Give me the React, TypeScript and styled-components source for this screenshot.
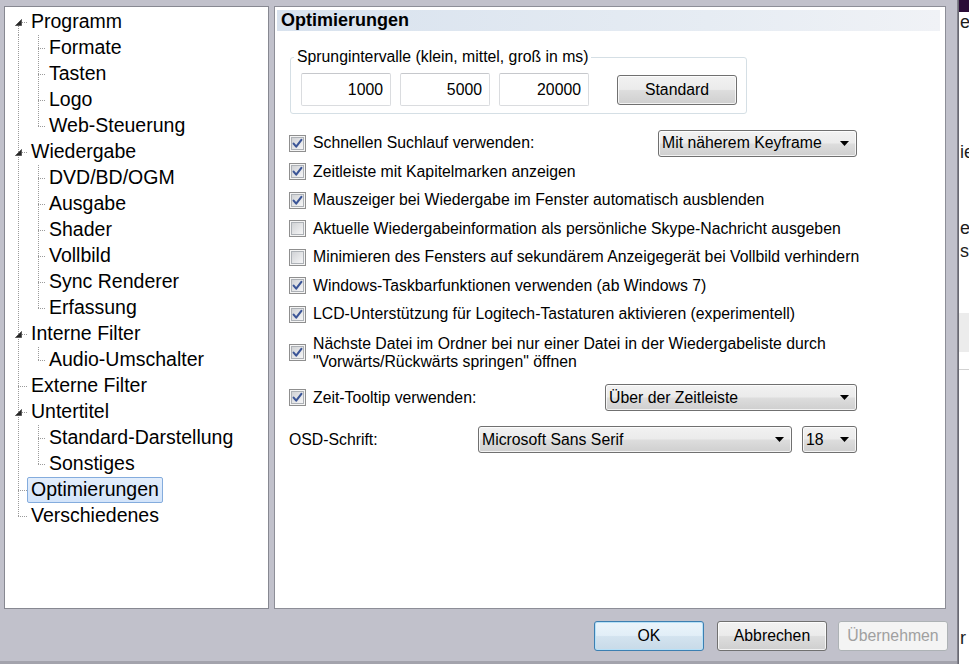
import { FC, useId } from "react"
import styled, { createGlobalStyle, css } from "styled-components"

const GlobalStyle = createGlobalStyle`
  html, body {
    margin: 0;
    padding: 0;
    background: #c1c1cb;
  }
  body {
    width: 969px;
    height: 664px;
    overflow: hidden;
  }
`

const Screen = styled.div`
  display: flex;
  width: 969px;
  height: 664px;
  overflow: hidden;
`
const Dialog = styled.div`
  width: 957px;
  flex: none;
  display: flex;
  flex-direction: column;
  background: #c1c1cb;
  border-bottom: 3px solid #a3a3ac;
  box-sizing: border-box;
`
const FrameEdge = styled.div`
  width: 2px;
  flex: none;
  background: linear-gradient(to right, #8e8e98, #5d5d66);
`
const OtherWindow = styled.div`
  flex: 1;
  display: flex;
  flex-direction: column;
  background: #fff;
  overflow: hidden;
  font: 18px "Liberation Sans", Arial, sans-serif;
  color: #1c1c1c;
`
const OtherTitle = styled.div`
  height: 12px;
  flex: none;
  background: #2b0c37;
`
const Fragment = styled.div<{ $top: number }>`
  margin-top: ${(p) => p.$top}px;
  line-height: 20px;
  white-space: nowrap;
  padding-left: 1px;
`
const FragmentBox = styled.div<{ $top: number; $h: number; $bg: string }>`
  margin-top: ${(p) => p.$top}px;
  height: ${(p) => p.$h}px;
  background: ${(p) => p.$bg};
  flex: none;
`

const Main = styled.div`
  display: flex;
  gap: 5px;
  padding: 6px 0 0 4px;
  height: 609px;
  box-sizing: border-box;
`
const TreePanel = styled.div`
  width: 265px;
  height: 603px;
  box-sizing: border-box;
  background: #fff;
  border: 1px solid #878891;
  padding-top: 2px;
  font: 19.5px "Liberation Sans", Arial, sans-serif;
  color: #000;
`
const SettingsPanel = styled.div`
  width: 672px;
  height: 603px;
  box-sizing: border-box;
  background: #fff;
  border: 1px solid #8d8e97;
  display: flex;
  flex-direction: column;
`

/* ---------- tree ---------- */

type LineKind = "full" | "top" | "bottom" | "none"

const dotsV = "repeating-linear-gradient(to bottom, #9b9b9b 0 1px, transparent 1px 2px)"
const dotsH = "repeating-linear-gradient(to right, #9b9b9b 0 1px, transparent 1px 2px)"

const TreeRow = styled.div`
  display: flex;
  height: 26px;
  align-items: center;
`
const Guide = styled.span<{ $w: number; $x: number; $line: LineKind; $stub: boolean }>`
  position: relative;
  flex: none;
  width: ${(p) => p.$w}px;
  height: 100%;

  &::before {
    content: "";
    display: ${(p) => (p.$line === "none" ? "none" : "block")};
    position: absolute;
    left: ${(p) => p.$x}px;
    width: 1px;
    top: ${(p) => (p.$line === "bottom" ? "50%" : "0")};
    bottom: ${(p) => (p.$line === "top" ? "50%" : "0")};
    background: ${dotsV};
  }
  &::after {
    content: "";
    display: ${(p) => (p.$stub ? "block" : "none")};
    position: absolute;
    left: ${(p) => p.$x}px;
    right: 0;
    top: 50%;
    height: 1px;
    background: ${dotsH};
  }
`
const Expander = styled.svg`
  position: absolute;
  left: 10px;
  top: 10px;
  z-index: 1;
`
const NodeLabel = styled.span<{ $selected?: boolean }>`
  height: 24px;
  line-height: 23px;
  padding: 0 3px;
  border: 1px solid transparent;
  border-radius: 2px;
  white-space: nowrap;
  ${(p) =>
    p.$selected &&
    css`
      background: linear-gradient(#e3eefc, #d3e4fa);
      border-color: #84acdd;
    `}
`

interface TreeNode {
  label: string
  children?: string[]
  selected?: boolean
}

const tree: TreeNode[] = [
  { label: "Programm", children: ["Formate", "Tasten", "Logo", "Web-Steuerung"] },
  {
    label: "Wiedergabe",
    children: ["DVD/BD/OGM", "Ausgabe", "Shader", "Vollbild", "Sync Renderer", "Erfassung"],
  },
  { label: "Interne Filter", children: ["Audio-Umschalter"] },
  { label: "Externe Filter" },
  { label: "Untertitel", children: ["Standard-Darstellung", "Sonstiges"] },
  { label: "Optimierungen", selected: true },
  { label: "Verschiedenes" },
]

const ExpandedGlyph = () => (
  <Expander width="7" height="7" viewBox="0 0 7 7">
    <polygon points="6.5,0.5 6.5,6.5 0.5,6.5" fill="#262626" stroke="#595959" strokeWidth="1" />
  </Expander>
)

const Tree: FC = () => (
  <TreePanel>
    {tree.map((node, i) => {
      const isFirst = i === 0
      const isLast = i === tree.length - 1
      const line: LineKind = isFirst ? "bottom" : isLast ? "top" : "full"
      return (
        <div key={node.label}>
          <TreeRow>
            <Guide $w={22} $x={13} $line={line} $stub>
              {node.children && <ExpandedGlyph />}
            </Guide>
            <NodeLabel $selected={node.selected}>{node.label}</NodeLabel>
          </TreeRow>
          {node.children?.map((child, j) => (
            <TreeRow key={child}>
              <Guide $w={22} $x={13} $line={isLast ? "none" : "full"} $stub={false} />
              <Guide
                $w={18}
                $x={11}
                $line={j === node.children!.length - 1 ? "top" : "full"}
                $stub
              />
              <NodeLabel>{child}</NodeLabel>
            </TreeRow>
          ))}
        </div>
      )
    })}
  </TreePanel>
)

/* ---------- settings page ---------- */

const TitleBar = styled.div`
  margin: 3px 5px 0 2px;
  height: 21px;
  line-height: 21px;
  padding-left: 4px;
  font: bold 18px "Liberation Sans", Arial, sans-serif;
  color: #000;
  background: linear-gradient(to right, #d8e2ee, #e6ecf3 65%, #f0f2f6);
`
const Body = styled.div`
  display: flex;
  flex-direction: column;
  padding: 0 88px 0 14px;
  font: 15.8px "Liberation Sans", Arial, sans-serif;
  color: #000;
`
const GroupBox = styled.fieldset`
  margin: 17px 0 0 1px;
  width: 457px;
  box-sizing: border-box;
  padding: 7px 9px 7px 10px;
  border: 1px solid #d5dfe5;
  border-radius: 3px;
  display: flex;
  align-items: center;
`
const Legend = styled.legend`
  margin-left: -7px;
  padding: 0 3px;
  line-height: 18px;
`
const NumberField = styled.input`
  width: 90px;
  height: 33px;
  box-sizing: border-box;
  margin: 0 9px 0 0;
  padding: 0 7px 0 0;
  border: 1px solid #dadcdf;
  border-top-color: #c6c8cc;
  border-radius: 2px;
  text-align: right;
  font: 15.8px "Liberation Sans", Arial, sans-serif;
  color: #000;
  background: #fff;
  outline: none;
`

const buttonFace = css`
  box-sizing: border-box;
  border: 1px solid #707070;
  border-radius: 3px;
  background: linear-gradient(#f2f2f2 0%, #ebebeb 48%, #dddddd 52%, #cfcfcf 100%);
  box-shadow: inset 0 0 0 1px rgba(255, 255, 255, 0.75);
  font: 15.8px "Liberation Sans", Arial, sans-serif;
  color: #000;
`
const PushButton = styled.button<{ $w: number; $gap?: number; $variant?: "default" | "disabled" }>`
  ${buttonFace};
  width: ${(p) => p.$w}px;
  height: 30px;
  padding: 0;
  margin-right: ${(p) => p.$gap ?? 0}px;
  flex: none;
  ${(p) =>
    p.$variant === "default" &&
    css`
      border-color: #3c7fb1;
      box-shadow: inset 0 0 0 1px #b6e0f7;
      background: linear-gradient(#eaf4fb 0%, #e2eef7 48%, #d3e3ef 52%, #c8dae8 100%);
    `}
  ${(p) =>
    p.$variant === "disabled" &&
    css`
      border-color: #adb2b5;
      background: #f4f4f4;
      box-shadow: none;
      color: #a0a0a0;
    `}
`
const StandardButton = styled(PushButton)`
  margin-left: 19px;
`

const Combo = styled.div<{ $w: number; $auto?: boolean }>`
  ${buttonFace};
  width: ${(p) => p.$w}px;
  height: 27px;
  flex: none;
  display: flex;
  align-items: center;
  justify-content: space-between;
  padding: 0 7px 0 3px;
  margin-left: ${(p) => (p.$auto ? "auto" : "0")};
  white-space: nowrap;
`
const ComboArrow = styled.svg`
  flex: none;
`

const CheckRow = styled.div`
  display: flex;
  align-items: center;
  gap: 7px;
  height: 28.5px;
  white-space: nowrap;
`
const FirstCheckRow = styled(CheckRow)`
  margin-top: 15px;
`
const TallCheckRow = styled(CheckRow)`
  height: auto;
  padding: 6px 0 13px;
  line-height: 18px;
`
const PlainRow = styled.div`
  display: flex;
  align-items: center;
  gap: 10px;
  height: 28.5px;
  margin-top: 13.5px;
`

const CheckBox: FC<{ checked?: boolean }> = ({ checked }) => {
  const id = useId()
  return (
    <svg width="17" height="17" viewBox="0 0 17 17" style={{ flex: "none" }}>
      <defs>
        <linearGradient id={id} x1="0" y1="0" x2="1" y2="1">
          <stop offset="0" stopColor="#cfd1d4" />
          <stop offset="1" stopColor="#f7f7f8" />
        </linearGradient>
      </defs>
      <rect x="0.5" y="0.5" width="16" height="16" fill="#f5f5f5" stroke="#8f8f8f" />
      <rect x="2.5" y="2.5" width="12" height="12" fill={`url(#${id})`} stroke="#adb1b6" />
      {checked && (
        <path
          d="M4.6 8.6 L7.2 11.6 L12.4 4.8"
          fill="none"
          stroke="#3b5597"
          strokeWidth="2.1"
          strokeLinecap="round"
          strokeLinejoin="round"
        />
      )}
    </svg>
  )
}

const Arrow = () => (
  <ComboArrow width="9" height="5" viewBox="0 0 9 5">
    <polygon points="0,0 9,0 4.5,5" fill="#000" />
  </ComboArrow>
)

const Select: FC<{ value: string; width: number; auto?: boolean }> = ({ value, width, auto }) => (
  <Combo $w={width} $auto={auto}>
    <span>{value}</span>
    <Arrow />
  </Combo>
)

const options: { label: string; checked: boolean }[] = [
  { label: "Zeitleiste mit Kapitelmarken anzeigen", checked: true },
  { label: "Mauszeiger bei Wiedergabe im Fenster automatisch ausblenden", checked: true },
  { label: "Aktuelle Wiedergabeinformation als persönliche Skype-Nachricht ausgeben", checked: false },
  { label: "Minimieren des Fensters auf sekundärem Anzeigegerät bei Vollbild verhindern", checked: false },
  { label: "Windows-Taskbarfunktionen verwenden (ab Windows 7)", checked: true },
  { label: "LCD-Unterstützung für Logitech-Tastaturen aktivieren (experimentell)", checked: true },
]

const Settings: FC = () => (
  <SettingsPanel>
    <TitleBar>Optimierungen</TitleBar>
    <Body>
      <GroupBox>
        <Legend>Sprungintervalle (klein, mittel, groß in ms)</Legend>
        <NumberField readOnly value="1000" />
        <NumberField readOnly value="5000" />
        <NumberField readOnly value="20000" />
        <StandardButton $w={120}>Standard</StandardButton>
      </GroupBox>

      <FirstCheckRow>
        <CheckBox checked />
        <span>Schnellen Suchlauf verwenden:</span>
        <Select value="Mit näherem Keyframe" width={199} auto />
      </FirstCheckRow>
      {options.map((o) => (
        <CheckRow key={o.label}>
          <CheckBox checked={o.checked} />
          <span>{o.label}</span>
        </CheckRow>
      ))}
      <TallCheckRow>
        <CheckBox checked />
        <span>
          Nächste Datei im Ordner bei nur einer Datei in der Wiedergabeliste durch
          <br />
          "Vorwärts/Rückwärts springen" öffnen
        </span>
      </TallCheckRow>
      <CheckRow>
        <CheckBox checked />
        <span>Zeit-Tooltip verwenden:</span>
        <Select value="Über der Zeitleiste" width={252} auto />
      </CheckRow>
      <PlainRow>
        <span>OSD-Schrift:</span>
        <Select value="Microsoft Sans Serif" width={314} auto />
        <Select value="18" width={55} />
      </PlainRow>
    </Body>
  </SettingsPanel>
)

const Footer = styled.div`
  display: flex;
  justify-content: flex-end;
  align-items: flex-start;
  padding: 12px 9px 0 0;
  flex: 1;
`

const App: FC = () => (
  <Screen>
    <GlobalStyle />
    <Dialog>
      <Main>
        <Tree />
        <Settings />
      </Main>
      <Footer>
        <PushButton $w={110} $gap={13} $variant="default">
          OK
        </PushButton>
        <PushButton $w={110} $gap={11}>
          Abbrechen
        </PushButton>
        <PushButton $w={110} $variant="disabled">
          Übernehmen
        </PushButton>
      </Footer>
    </Dialog>
    <FrameEdge />
    <OtherWindow>
      <OtherTitle />
      <Fragment $top={0}>e</Fragment>
      <Fragment $top={110}>ie</Fragment>
      <Fragment $top={56}>e</Fragment>
      <Fragment $top={3}>s</Fragment>
      <FragmentBox $top={52} $h={39} $bg="#ececec" />
      <FragmentBox $top={17} $h={1} $bg="#d2d2d2" />
      <Fragment $top={258}>r</Fragment>
    </OtherWindow>
  </Screen>
)

export default App
